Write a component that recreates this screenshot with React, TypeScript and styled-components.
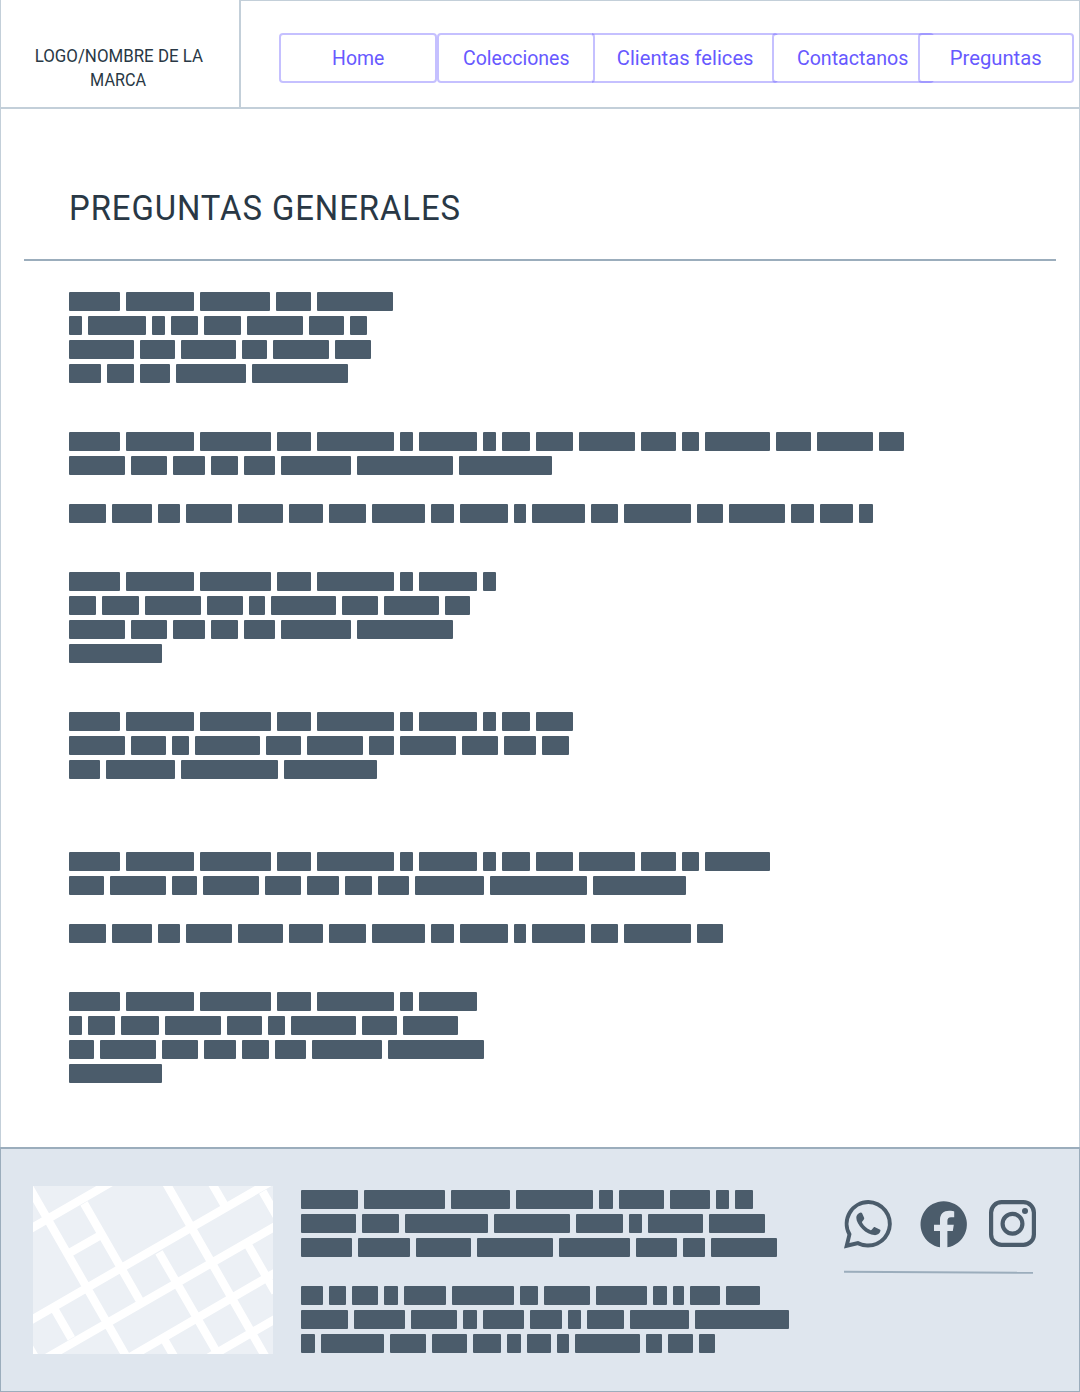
import React from "react";
import styled, { createGlobalStyle } from "styled-components";

const color = {
  ink: "#293845",
  bar: "#4b5c6b",
  line: "#c3cfd9",
  rule: "#9badbc",
  footer: "#dfe6ee",
  map: "#ecf0f5",
  accent: "#6759ff",
  accentLine: "rgba(103, 89, 255, 0.38)",
};

const GlobalStyle = createGlobalStyle`
  *, *::before, *::after { box-sizing: border-box; }
  body {
    margin: 0;
    background: #fff;
    font-family: Roboto, "Liberation Sans", sans-serif;
    color: ${color.ink};
  }
`;

const Page = styled.div`
  display: flex;
  flex-direction: column;
  width: 1080px;
  height: 1392px;
  overflow: hidden;
`;

const Header = styled.header`
  display: flex;
  height: 109px;
  border-bottom: 2px solid ${color.line};
  border-left: 1px solid ${color.line};
  border-right: 1px solid ${color.line};
`;

const Brand = styled.div`
  display: flex;
  justify-content: center;
  width: 240px;
  padding: 44px 3px 0 0;
  border-right: 2px solid ${color.line};
  font-size: 18px;
  line-height: 24px;
  text-align: center;
`;

const Fit = styled.span<{ $x: number }>`
  display: inline-block;
  white-space: nowrap;
  transform: scaleX(${(p) => p.$x});
`;

const BrandLines = styled.div`
  display: flex;
  flex-direction: column;
  align-items: center;
`;

const Nav = styled.nav`
  display: flex;
  flex: 1;
  align-items: flex-start;
  padding: 32px 0 0 38px;
  border-top: 1px solid ${color.line};
`;

const NavButton = styled.a<{ $w: number; $overlap?: number; $joined?: boolean }>`
  display: flex;
  flex: none;
  align-items: center;
  justify-content: center;
  width: ${(p) => p.$w}px;
  height: 50px;
  margin-left: ${(p) => -(p.$overlap ?? 0)}px;
  border: 2px solid ${color.accentLine};
  border-radius: 4px;
  background: #fff;
  background-clip: padding-box;
  color: ${color.accent};
  font-size: 21px;
  font-weight: 450;
  line-height: 24px;
  ${(p) =>
    p.$joined &&
    `
    padding-left: 2px;
    border-left: 0;
    border-radius: 0 4px 4px 0;
    background: none;
  `}
`;

const Main = styled.main`
  flex: none;
  height: 1038px;
  border-left: 1px solid ${color.line};
  border-right: 1px solid ${color.line};
`;

const Title = styled.h1`
  height: 150px;
  margin: 0 23px;
  padding: 79px 0 0 44.5px;
  font-size: 35px;
  font-weight: 400;
  line-height: 42px;
`;

const TitleText = styled(Fit)`
  transform-origin: left;
  letter-spacing: 1px;
`;

const Rule = styled.hr`
  height: 2px;
  margin: 0 23px;
  border: 0;
  background: ${color.rule};
`;

const Blocks = styled.div`
  display: grid;
  grid-auto-rows: 140px;
  padding: 31px 0 0 68px;
`;

const Lines = styled.div`
  display: flex;
  flex-direction: column;
  gap: 5px;
`;

const Line = styled.div`
  display: flex;
  gap: 6px;
  height: 19px;
`;

const Word = styled.span<{ $w: number }>`
  flex: none;
  width: ${(p) => p.$w}px;
  border-radius: 1px;
  background: ${color.bar};
`;

const Footer = styled.footer`
  display: flex;
  flex: 1;
  align-items: flex-start;
  border: 1px solid ${color.rule};
  border-top-width: 2px;
  background: ${color.footer};
`;

const MapArt = styled.svg`
  flex: none;
  width: 240px;
  height: 168px;
  margin: 37px 0 0 32px;
  background: ${color.map};
`;

const FooterText = styled.div`
  flex: none;
  width: 571px;
  padding: 41px 0 0 28px;
`;

const Social = styled.div`
  display: flex;
  flex-direction: column;
  padding-top: 51px;
`;

const Icons = styled.div`
  display: flex;
  height: 49px;
  gap: 22.5px;
`;

const Icon = styled.svg.attrs({ width: 50, height: 50 })`
  flex: none;
  overflow: visible;
`;

// Widths of the masked words of the question copy, keyed by letter.
const words: Record<string, number> = {
  A: 51.3, B: 67.9, C: 70.5, D: 34.7, E: 76.6, F: 13.2, G: 58.1, H: 27.1, I: 37.3,
  J: 56.1, K: 35.2, L: 16.7, M: 65.1, O: 55.6, P: 24.9, Q: 32.1, R: 30.6, S: 69.7,
  T: 96.5, U: 93, W: 36.1,
};
const copy = (s: string) => s.split("").map((c) => words[c]);

const closing = [
  37.4, 39.6, 22, 46.4, 45, 34, 37, 52.4, 23.2, 47.8, 12.6, 52.3, 27.3, 66.8, 25.9, 56.1,
  23.2, 33.4, 14.1,
];

const questions: number[][][] = [
  [
    [51.3, 67.9, 70, 34.6, 76],
    [13, 58, 13, 27, 37, 56.2, 34.8, 16.8],
    [65, 34.8, 55.5, 25, 56, 36],
    [32, 27, 30.3, 69.5, 96.4],
  ],
  [copy("ABCDEFGFHIJKLMKOP"), copy("JWQHRSTU"), [], closing],
  [copy("ABCDEFGF"), copy("HIJKLMKOP"), copy("JWQHRST"), copy("U")],
  [copy("ABCDEFGFHI"), copy("JKLMKOPJWQH"), copy("RSTU")],
  [copy("ABCDEFGFHIJKLM"), copy("KOPJWQHRSTU"), [], closing.slice(0, 15)],
  [copy("ABCDEFG"), copy("FHIJKLMKO"), copy("PJWQHRST"), copy("U")],
];

const about: number[][] = [
  [57, 81.3, 59, 77, 13.4, 45.3, 39.7, 13.3, 18],
  [55.3, 36.4, 83, 76.7, 46.3, 13, 55, 56.5],
  [51.3, 51.4, 55.3, 76, 70.7, 41.6, 21.7, 66],
  [],
  [21.7, 17.3, 26.3, 13.7, 42, 62.3, 17.4, 46.6, 50.7, 13.7, 11.6, 29.7, 34],
  [47, 50.7, 46.3, 14, 41, 32, 12.7, 37.3, 58.7, 94.3],
  [14, 63, 36, 35, 28, 14, 24, 12, 65, 16, 25, 16],
];

const Masked = ({ lines }: { lines: number[][] }) => (
  <Lines>
    {lines.map((line, i) => (
      <Line key={i}>
        {line.map((w, j) => (
          <Word key={j} $w={w} />
        ))}
      </Line>
    ))}
  </Lines>
);

const StreetMap = () => (
  <MapArt viewBox="39 33 720 504">
    <path
      fill="none"
      stroke="#fff"
      strokeWidth="25"
      d="M20 23 326 557M192 85 360 378M431 12 743 557M568 12 616 95M728 50 774 130M417 232 594 538M684 210 766 352M105 405 154 490M432 492 466 551M27 516 51 557M20 168 278 19M20 443 759 16M60 560 778 147M310 558 778 286M550 557 778 425M150 233 246 178"
    />
  </MapArt>
);

const WhatsApp = () => (
  <Icon viewBox="0 0 50 50">
    <path
      fill={color.bar}
      fillRule="evenodd"
      d="M24.3 0A23.8 23.8 0 1 1 13.6 45.2L0 48.4 3.4 34.8A23.8 23.8 0 0 1 24.3 0ZM24.3 4A19.8 19.8 0 0 0 7.5 34.1L5.4 43 14.1 40.9A19.8 19.8 0 1 0 24.3 4Z"
    />
    <path
      fill={color.bar}
      d="M15.3 13c.9-.7 2.4-.7 2.8.2l2 4.5c.3.7.1 1.3-.3 1.9l-1.5 2c-.4.5-.4.8 0 1.5 1.8 3 4.4 5.4 8 7 .6.3 1 .2 1.4-.3l1.9-2.3c.5-.5.9-.6 1.5-.3l4.6 2.2c.7.4.9.7.7 1.7-.6 2.8-3.5 4.3-6.2 4-3.7-.4-8.4-2.7-11.9-6.2-3.5-3.6-6-7.8-6-11.2 0-1.9 1-3.4 3-4.7Z"
    />
  </Icon>
);

const Facebook = () => (
  <Icon viewBox="-1.2 0.3 50 50">
    <path
      fill={color.bar}
      d="M21.8 47.6A23.2 23.2 0 1 1 29.2 47.6V31.3h5.4l1-6.3h-6.4v-3.8c0-2 .9-3.7 3.7-3.7H36V11.7s-2.6-.6-5.1-.6c-5.3 0-9.1 3.2-9.1 9V25h-6v6.3h6Z"
    />
  </Icon>
);

const Instagram = () => (
  <Icon viewBox="0 0 50 50">
    <g fill="none" stroke={color.bar} strokeWidth="4.2">
      <rect x="2.1" y="2.1" width="42.8" height="42.8" rx="10.5" />
      <circle cx="23.5" cy="23.7" r="9.9" />
    </g>
    <circle cx="36" cy="11" r="3" fill={color.bar} />
  </Icon>
);

export default function App() {
  return (
    <>
      <GlobalStyle />
      <Page>
        <Header>
          <Brand>
            <BrandLines>
              <Fit $x={0.937}>LOGO/NOMBRE DE LA</Fit>
              <Fit $x={0.9}>MARCA</Fit>
            </BrandLines>
          </Brand>
          <Nav>
            <NavButton $w={158}><Fit $x={0.925}>Home</Fit></NavButton>
            <NavButton $w={158}><Fit $x={0.93}>Colecciones</Fit></NavButton>
            <NavButton $w={186} $overlap={3} $joined><Fit $x={0.96}>Clientas felices</Fit></NavButton>
            <NavButton $w={162} $overlap={6}><Fit $x={0.935}>Contactanos</Fit></NavButton>
            <NavButton $w={156} $overlap={16}><Fit $x={0.965}>Preguntas</Fit></NavButton>
          </Nav>
        </Header>
        <Main>
          <Title><TitleText $x={0.938}>PREGUNTAS GENERALES</TitleText></Title>
          <Rule />
          <Blocks>
            {questions.map((lines, i) => (
              <Masked key={i} lines={lines} />
            ))}
          </Blocks>
        </Main>
        <Footer>
          <StreetMap />
          <FooterText><Masked lines={about} /></FooterText>
          <Social>
            <Icons>
              <WhatsApp />
              <Facebook />
              <Instagram />
            </Icons>
            <svg width="190" height="30" viewBox="0 0 190 30">
              <path d="M0 22.8 189 23.8" stroke={color.rule} strokeWidth="2" />
            </svg>
          </Social>
        </Footer>
      </Page>
    </>
  );
}
